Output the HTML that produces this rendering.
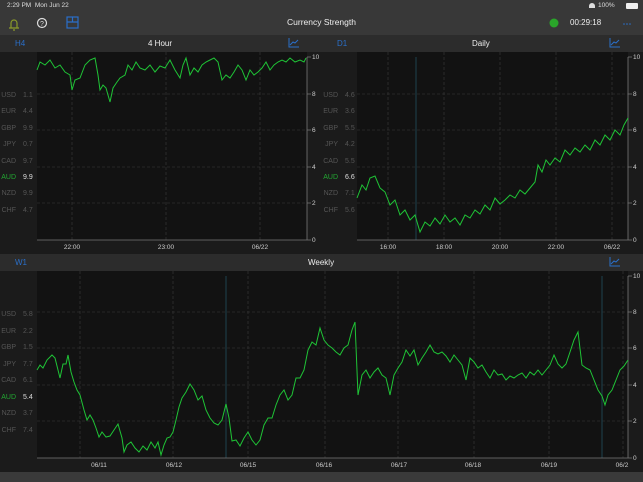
<!DOCTYPE html>
<html><head><meta charset="utf-8"><style>
*{margin:0;padding:0;box-sizing:border-box}
body{width:643px;height:482px;background:#1b1b1b;font-family:"Liberation Sans",sans-serif;position:relative;overflow:hidden;color:#ddd}
.a{position:absolute}
.lab{position:absolute;font-size:7px;color:#555;}
.lab b{font-weight:normal;display:inline-block;width:16px;text-align:right;margin-right:7px}
</style></head><body>
<div class="a" style="left:0;top:0;width:643px;height:35px;background:#383838"></div>
<div class="a" style="left:7px;top:2px;font-size:6.5px;color:#ddd">2:29 PM&nbsp;&nbsp;Mon Jun 22</div>
<div class="a" style="left:598px;top:2px;font-size:6.5px;color:#ddd">100%</div>
<div class="a" style="left:626px;top:3px;width:12px;height:6px;background:#eee;border-radius:1px"></div>
<div class="a" style="left:589px;top:3px;width:6px;height:5px;background:#ddd;border-radius:3px 3px 0 0"></div>
<svg class="a" style="left:0;top:12px" width="643" height="23">
<path d="M9 16 h10 M11 16 v-5 a3 3 0 0 1 6 0 v5 M13 18 h2" stroke="#8a9a2a" stroke-width="1.2" fill="none"/>
<circle cx="42" cy="11" r="4.5" stroke="#ddd" stroke-width="1.2" fill="none"/>
<text x="42" y="14" font-size="7" fill="#ddd" text-anchor="middle" font-family="Liberation Sans">?</text>
<rect x="67" y="5" width="11" height="11" stroke="#2a6fc9" stroke-width="1.2" fill="none"/>
<path d="M67 10 h11 M72.5 5 v5" stroke="#2a6fc9" stroke-width="1.2"/>
<circle cx="554" cy="11" r="4.5" fill="#2aa52a"/>
<circle cx="624" cy="12" r="0.8" fill="#2a6fc9"/><circle cx="627" cy="12" r="0.8" fill="#2a6fc9"/><circle cx="630" cy="12" r="0.8" fill="#2a6fc9"/>
</svg>
<div class="a" style="left:0;top:17px;width:643px;text-align:center;font-size:8.5px;color:#eee">Currency Strength</div>
<div class="a" style="left:570px;top:18px;font-size:8px;color:#eee">00:29:18</div>

<div class="a" style="left:0;top:35px;width:643px;height:17px;background:#2c2c2c"></div>
<div class="a" style="left:0;top:254px;width:643px;height:17px;background:#2c2c2c"></div>
<div class="a" style="left:15px;top:39px;font-size:8px;color:#2a6fc9">H4</div>
<div class="a" style="left:148px;top:39px;font-size:8px;color:#eee">4 Hour</div>
<div class="a" style="left:337px;top:39px;font-size:8px;color:#2a6fc9">D1</div>
<div class="a" style="left:472px;top:39px;font-size:8px;color:#eee">Daily</div>
<div class="a" style="left:15px;top:258px;font-size:8px;color:#2a6fc9">W1</div>
<div class="a" style="left:308px;top:258px;font-size:8px;color:#eee">Weekly</div>
<div class="a" style="left:0;top:472px;width:643px;height:10px;background:#3a3a3a"></div>

<div class="lab" style="left:0;top:88px;line-height:16.4px"><b>USD</b>1.1<br><b>EUR</b>4.4<br><b>GBP</b>9.9<br><b>JPY</b>0.7<br><b>CAD</b>9.7<br><b style="color:#22a832">AUD</b><span style="color:#ddd">9.9</span><br><b>NZD</b>9.9<br><b>CHF</b>4.7</div>
<div class="lab" style="left:322px;top:88px;line-height:16.4px"><b>USD</b>4.6<br><b>EUR</b>3.6<br><b>GBP</b>5.5<br><b>JPY</b>4.2<br><b>CAD</b>5.5<br><b style="color:#22a832">AUD</b><span style="color:#ddd">6.6</span><br><b>NZD</b>7.1<br><b>CHF</b>5.6</div>
<div class="lab" style="left:0;top:307px;line-height:16.5px"><b>USD</b>5.8<br><b>EUR</b>2.2<br><b>GBP</b>1.5<br><b>JPY</b>7.7<br><b>CAD</b>6.1<br><b style="color:#22a832">AUD</b><span style="color:#ddd">5.4</span><br><b>NZD</b>3.7<br><b>CHF</b>7.4</div>

<svg class="a" style="left:0;top:0" width="643" height="482" font-family="Liberation Sans" font-size="6.5">
<g fill="none" stroke="#2a6fc9" stroke-width="1">
<path d="M289 38 v9 h10 M290 45 l3-3 2 1 3-3"/>
<path d="M610 38 v9 h10 M611 45 l3-3 2 1 3-3"/>
<path d="M610 257 v9 h10 M611 264 l3-3 2 1 3-3"/>
</g>
<rect x="37" y="52" width="270" height="188" fill="#121212"/>
<rect x="357" y="52" width="271" height="188" fill="#121212"/>
<rect x="37" y="271" width="591" height="187" fill="#121212"/>
<g stroke="#3a3a3a" stroke-width="0.6" stroke-dasharray="3,2">
<path d="M37 94 H307 M37 130 H307 M37 167 H307 M37 203 H307 M72 52 V240 M166 52 V240 M260 52 V240"/>
<path d="M357 94 H628 M357 130 H628 M357 167 H628 M357 203 H628 M388 52 V240 M444 52 V240 M500 52 V240 M556 52 V240 M612 52 V240"/>
<path d="M37 312 H628 M37 348 H628 M37 385 H628 M37 421 H628 M80 271 V458 M173 271 V458 M248 271 V458 M325 271 V458 M398 271 V458 M474 271 V458 M549 271 V458 M623 271 V458"/>
</g>
<g stroke="#1d3a44" stroke-width="1.2"><path d="M416 57 V240 M226 276 V458 M602 276 V458"/></g>
<g stroke="#777" stroke-width="0.8" fill="none">
<path d="M37 240 H307 M307 57 V240 M357 240 H628 M628 57 V240 M37 458 H628 M628 276 V458"/>
<path d="M307 57 h4 M307 94 h4 M307 130 h4 M307 167 h4 M307 203 h4 M307 240 h4 M628 57 h4 M628 94 h4 M628 130 h4 M628 167 h4 M628 203 h4 M628 240 h4 M628 276 h4 M628 312 h4 M628 348 h4 M628 385 h4 M628 421 h4 M628 458 h4"/>
</g>
<g fill="#ccc">
<text x="312" y="59">10</text><text x="312" y="96">8</text><text x="312" y="132">6</text><text x="312" y="169">4</text><text x="312" y="205">2</text><text x="312" y="242">0</text>
<text x="633" y="59">10</text><text x="633" y="96">8</text><text x="633" y="132">6</text><text x="633" y="169">4</text><text x="633" y="205">2</text><text x="633" y="242">0</text>
<text x="633" y="278">10</text><text x="633" y="314">8</text><text x="633" y="350">6</text><text x="633" y="387">4</text><text x="633" y="423">2</text><text x="633" y="460">0</text>
<g text-anchor="middle"><text x="72" y="249">22:00</text><text x="166" y="249">23:00</text><text x="260" y="249">06/22</text>
<text x="388" y="249">16:00</text><text x="444" y="249">18:00</text><text x="500" y="249">20:00</text><text x="556" y="249">22:00</text><text x="612" y="249">06/22</text>
<text x="99" y="467">06/11</text><text x="174" y="467">06/12</text><text x="248" y="467">06/15</text><text x="324" y="467">06/16</text><text x="399" y="467">06/17</text><text x="473" y="467">06/18</text><text x="549" y="467">06/19</text><text x="622" y="467">06/2</text></g>
</g>
<g fill="none" stroke="#1fc436" stroke-width="1">
<polyline points="37,70 40,62 45,65 50,60 55,68 60,65 65,72 70,75 72,90 75,80 80,78 85,65 90,60 95,58 98,75 100,90 103,85 106,88 110,102 113,88 117,82 120,78 125,75 128,65 132,70 136,62 140,68 145,70 150,65 155,72 160,66 165,68 170,60 175,70 180,78 183,65 186,58 190,75 194,68 198,72 202,65 206,62 210,60 214,58 218,62 222,80 226,75 230,78 234,72 238,65 242,70 246,80 250,70 254,75 258,72 262,68 266,62 270,70 274,65 278,62 282,60 286,62 290,58 295,62 300,60 304,62 306,58"/>
<polyline points="357,198 362,185 366,190 370,178 375,176 380,188 385,192 390,205 395,200 400,215 405,210 410,220 415,215 420,232 425,222 430,226 435,218 440,224 445,215 450,222 455,218 460,225 465,215 470,218 475,210 480,214 485,205 490,210 495,198 500,204 505,200 510,195 515,198 520,190 525,194 530,188 535,182 538,165 542,172 546,160 550,165 555,158 560,162 565,150 570,155 575,148 580,152 585,145 590,150 595,140 600,145 605,135 610,140 615,130 620,135 624,125 628,118"/>
<polyline points="37,370 40,365 43,368 47,360 52,355 55,358 58,370 60,378 63,364 66,364 68,355 71,372 74,382 77,390 80,395 84,410 87,420 90,415 93,420 96,428 99,437 102,432 106,437 110,436 114,430 118,424 122,438 124,452 127,445 131,442 135,448 139,452 143,446 147,450 151,442 155,448 158,442 161,455 164,445 167,438 170,437 173,432 176,420 179,407 182,398 186,392 190,384 194,390 198,400 202,396 206,410 210,418 214,423 218,425 222,420 226,404 229,418 232,441 236,440 240,446 244,438 248,432 252,440 256,445 260,440 264,425 268,418 272,418 276,405 280,395 284,390 288,400 292,395 296,378 300,378 304,370 308,350 312,342 316,345 320,328 324,340 328,345 332,348 336,352 340,355 344,348 348,345 352,330 355,322 358,395 362,375 366,370 370,378 374,372 378,368 382,375 386,378 390,395 394,375 398,368 402,362 406,350 410,356 414,350 418,365 422,358 426,352 430,345 434,352 438,354 442,352 446,356 450,362 454,355 458,360 462,365 466,380 470,358 474,362 478,368 482,365 486,372 490,378 494,370 498,375 502,374 506,380 510,376 514,378 518,375 522,373 526,378 530,372 534,375 538,370 542,375 546,370 550,365 554,355 558,364 562,368 566,364 570,352 574,340 578,332 582,365 586,368 590,370 594,380 598,390 602,396 605,405 608,395 612,390 616,380 620,370 624,366 628,360"/>
</g>
</svg>
</body></html>
